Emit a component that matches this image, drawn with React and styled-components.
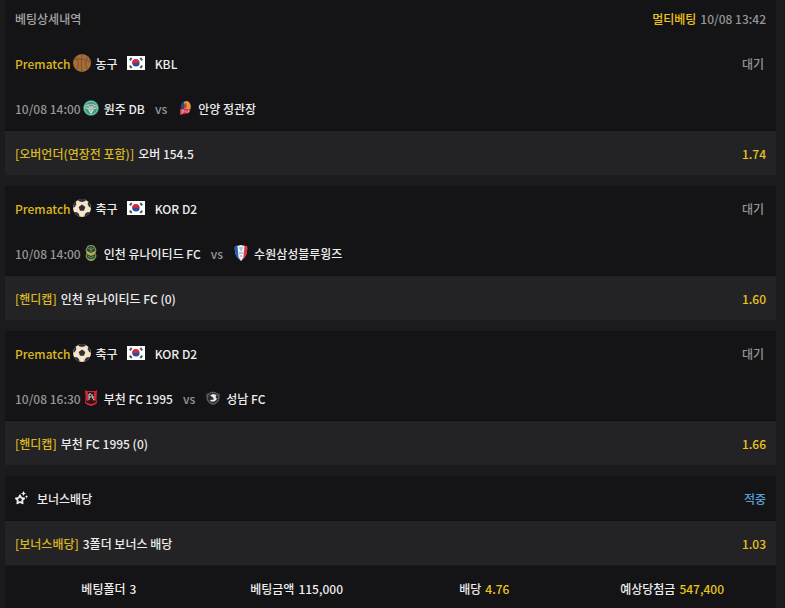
import React from 'react'
import styled, { createGlobalStyle } from 'styled-components'

const bets = [
  {
    id: 1,
    sport: 'basketball',
    sportName: '농구',
    league: 'KBL',
    time: '10/08 14:00',
    home: { name: '원주 DB', logo: 'wonju' },
    away: { name: '안양 정관장', logo: 'anyang' },
    market: '[오버언더(연장전 포함)]',
    pick: '오버 154.5',
    odds: '1.74'
  },
  {
    id: 2,
    sport: 'soccer',
    sportName: '축구',
    league: 'KOR D2',
    time: '10/08 14:00',
    home: { name: '인천 유나이티드 FC', logo: 'incheon' },
    away: { name: '수원삼성블루윙즈', logo: 'suwon' },
    market: '[핸디캡]',
    pick: '인천 유나이티드 FC (0)',
    odds: '1.60'
  },
  {
    id: 3,
    sport: 'soccer',
    sportName: '축구',
    league: 'KOR D2',
    time: '10/08 16:30',
    home: { name: '부천 FC 1995', logo: 'bucheon' },
    away: { name: '성남 FC', logo: 'seongnam' },
    market: '[핸디캡]',
    pick: '부천 FC 1995 (0)',
    odds: '1.66'
  }
]

const totals = [
  { label: '베팅폴더', value: '3' },
  { label: '베팅금액', value: '115,000' },
  { label: '배당', value: '4.76', gold: true },
  { label: '예상당첨금', value: '547,400', gold: true }
]

const sportIcons = {
  basketball: (
    <>
      <circle cx='9' cy='9' r='9' fill='#a46c39' />
      <g fill='none' stroke='#6f4b28' strokeWidth='0.8'>
        <path d='M0.500 6C6 4 12 5 17.500 8M9.500 0C8 5 8 12 9 18M2.500 3C6 7 6 12 3.500 16M15.500 2.500C12 6 12 12 14.500 16' />
      </g>
    </>
  ),
  soccer: (
    <>
      <circle cx='9' cy='9' r='9' fill='#f6e5cd' />
      <g fill='#302f31'>
        <path d='M9 5.600L12.300 8L11 11.800H7L5.700 8Z' />
        <path d='M5 0.900L6 2.200L9 3L12 2.200L13 0.900Q9-1 5 0.900Z' />
        <path d='M15 2.200L14.800 5.500L16.200 8L18 8.800Q18 5 15 2.200Z' />
        <path d='M3 2.200L3.200 5.500L1.800 8L0 8.800Q0 5 3 2.200Z' />
        <path d='M17 13L14 13.300L12 15L11.400 17.700Q15 16.700 17 13Z' />
        <path d='M1 13L4 13.300L6 15L6.600 17.700Q3 16.700 1 13Z' />
      </g>
    </>
  )
}

const teamLogos = {
  wonju: (
    <>
      <circle cx='8' cy='8' r='7.800' fill='#3a9c84' />
      <circle cx='8' cy='8' r='6.600' fill='none' stroke='#8fd3bd' strokeWidth='0.8' />
      <path d='M2 7Q3 4 8 4Q13 4 14 7L13 9H3Z' fill='#b3c9c1' />
      <path d='M3 7H6M10 7H13M6 5L8 6L10 5' stroke='#5c7770' fill='none' />
      <path d='M5 9.500H11L8 14Z' fill='#dceee6' />
      <path d='M7 10H9L8 13Z' fill='#c8a94c' />
    </>
  ),
  anyang: (
    <>
      <path d='M4 9Q3 1 9 1L8 10H4Z' fill='#2b4788' />
      <path d='M7 2Q10 0 12 2Q15 5 13 10L7 10Z' fill='#e2953a' />
      <path d='M7 4L9 3L10 7L7 9Z' fill='#b5463f' />
      <path d='M3 9L13 9L12 13L3 15Z' fill='#cf2c48' />
      <path d='M5 10V14M5 10H7V12H5M9 10V13M11 10H12V12H10' stroke='#f1b2af' strokeWidth='0.8' fill='none' />
    </>
  ),
  incheon: (
    <>
      <path d='M4.500 1Q8-1 11.500 1L13.500 5L12.500 8L13.500 11Q12 16 8 16Q4 16 2.500 11L3.500 8L2.500 5Z' fill='#a39c42' />
      <path d='M5 2Q8 0 11 2L12.500 5.500L8 8L3.500 5.500Z' fill='#174a4a' />
      <path d='M3.500 9L8 11L12.500 9L12 12.500Q8 16 4 12.500Z' fill='#174a4a' />
      <path d='M5 3L8 5L11 3M8 2V7M5 11L8 13L11 11' stroke='#72905a' fill='none' />
      <path d='M4 7L8 9.500L12 7' stroke='#d4c040' fill='none' />
    </>
  ),
  suwon: (
    <>
      <path d='M2 1Q5 1 8 0Q11 1 14 1Q15 9 11 13L8 16L5 13Q1 9 2 1Z' fill='#eef1f5' />
      <path d='M2 1L4.500 1L5.500 12L8 16L4 12Q1 8 2 1Z' fill='#2a5db1' />
      <path d='M14 1H11.500L10.500 12L8 16L12 12Q15 8 14 1Z' fill='#d93546' />
      <path d='M6 3H10M7 5H9M6 8H10M7 11H9' stroke='#8399bd' />
    </>
  ),
  bucheon: (
    <>
      <path d='M2 0L4 1H12L14 0L13.500 8L14 13Q11 16 8 16Q5 16 2 13L2.500 8Z' fill='#d32434' />
      <path d='M5 2H11V9Q11 12 8 13Q5 12 5 9Z' fill='#29191b' />
      <path d='M6 4V10M6 4H8M6 7H8M9 4V7H11M9 7L11 10' stroke='#e8dcda' fill='none' />
      <path d='M3 11Q8 15 13 11' stroke='#180e10' strokeWidth='1.500' fill='none' />
    </>
  ),
  seongnam: (
    <>
      <path d='M1 4L4 3Q8 0 12 3L15 4L14.500 9Q13 14 8 15Q3 14 1.500 9Z' fill='#4b4c4e' />
      <circle cx='8' cy='8' r='5.500' fill='#2a2b2c' stroke='#8b8d8f' strokeDasharray='1 1' />
      <path d='M5 5.500L8 4L11.500 5L10.500 7L12 9L9.500 11.500H6L5 10L9 9.500L8 7.500Z' fill='#eeeeee' />
    </>
  )
}

const Flag = () => (
  <svg width='18' height='14' viewBox='0 0 18 14' aria-hidden='true'>
    <rect width='18' height='14' fill='#ffffff' />
    <circle cx='9' cy='7' r='3.600' fill='#21509c' />
    <path d='M5.600 8.200A3.600 3.600 0 1 1 12.200 5.400Q11 7.400 9 7Q6.500 6.500 5.600 8.200Z' fill='#d6293a' />
    <path
      d='M2.800 4.300L4.700 2M13.300 2L15.200 4.300M2.800 9.700L4.700 12M13.300 12L15.200 9.700'
      stroke='#555555'
      strokeWidth='2'
    />
  </svg>
)

const BonusIcon = () => (
  <svg width='14' height='14' viewBox='0 0 14 14' fill='none' aria-hidden='true'>
    <path
      d='M5 4.300L6.300 6.800L9.200 7.300L7.200 9.400L7.600 12.300L5 11L2.300 12.300L2.800 9.400L0.900 7.300L3.700 6.800Z'
      stroke='#ededed'
      strokeWidth='1.800'
      strokeLinejoin='round'
    />
    <path
      d='M8.500 0L9.300 1.700L11 2.500L9.300 3.300L8.500 5L7.700 3.300L6 2.500L7.700 1.700ZM11.500 4L12 5.200L13.200 5.700L12 6.200L11.500 7.400L11 6.200L9.800 5.700L11 5.200Z'
      fill='#ededed'
    />
  </svg>
)

const Team = ({ team }) => (
  <IconLabel>
    <svg width='16' height='16' viewBox='0 0 16 16' aria-hidden='true'>
      {teamLogos[team.logo]}
    </svg>
    {team.name}
  </IconLabel>
)

const Bet = ({ bet }) => (
  <Card>
    <Row>
      <Info>
        <Label $tone='gold'>Prematch</Label>
        <IconLabel>
          <svg width='18' height='18' viewBox='0 0 18 18' aria-hidden='true'>
            {sportIcons[bet.sport]}
          </svg>
          {bet.sportName}
        </IconLabel>
        <League>
          <Flag />
          {bet.league}
        </League>
      </Info>
      <Status>대기</Status>
    </Row>
    <Row>
      <Info>
        <Label $tone='muted'>{bet.time}</Label>
        <Team team={bet.home} />
        <Versus>vs</Versus>
        <Team team={bet.away} />
      </Info>
    </Row>
    <PickRow>
      <Pick>
        <Label $tone='gold'>{bet.market}</Label>
        <span>{bet.pick}</span>
      </Pick>
      <Label $tone='bright'>{bet.odds}</Label>
    </PickRow>
  </Card>
)

const App = () => (
  <Page>
    <GlobalStyle />
    <Header>
      <Title>베팅상세내역</Title>
      <Pick>
        <Label $tone='bright'>멀티베팅</Label>
        <Label $tone='muted'>10/08 13:42</Label>
      </Pick>
    </Header>
    {bets.map(bet => <Bet key={bet.id} bet={bet} />)}
    <Card>
      <Row>
        <Bonus>
          <BonusIcon />
          보너스배당
        </Bonus>
        <Label $tone='blue'>적중</Label>
      </Row>
      <PickRow>
        <Pick>
          <Label $tone='gold'>[보너스배당]</Label>
          <span>3폴더 보너스 배당</span>
        </Pick>
        <Label $tone='bright'>1.03</Label>
      </PickRow>
    </Card>
    <Totals>
      {totals.map(item => (
        <Total key={item.label}>
          <dt>{item.label}</dt>
          <Amount $gold={item.gold}>{item.value}</Amount>
        </Total>
      ))}
    </Totals>
  </Page>
)

const tones = {
  gold: '#dbb71f',
  bright: '#ecc51c',
  muted: '#969696',
  blue: '#5b9fd6'
}

const GlobalStyle = createGlobalStyle`
  * {
    box-sizing: border-box;
  }

  body {
    margin: 0;
    background: #1b1b1d;
    color: #ededed;
    font: 500 12px/18px 'Noto Sans CJK KR', sans-serif;
  }

  svg {
    display: block;
    flex: none;
  }
`

const Page = styled.main`
  padding: 0 9px 0 5px;
  white-space: nowrap;
`

const Row = styled.div`
  display: flex;
  align-items: center;
  justify-content: space-between;
  height: 45px;
  padding: 0 10px;
  background: #141416;
`

const Header = styled(Row).attrs({ as: 'header' })`
  height: 41px;
  padding-bottom: 3px;
`

const PickRow = styled(Row)`
  padding-top: 2px;
  background: #232326;
  border-bottom: 1px solid #1b1b1d;
  box-shadow: 0 -1px #101012;
`

const Card = styled.section`
  & + & {
    margin-top: 10px;
  }
`

const Info = styled.div`
  display: flex;
  align-items: center;
  gap: 2px;
`

const Pick = styled(Info)`
  gap: 4px;
`

const Title = styled.h1`
  margin: 0;
  color: #a5a5a5;
  font: inherit;
`

const Label = styled.span`
  color: ${props => tones[props.$tone]};
`

const Status = styled.span`
  padding-right: 2px;
  color: #969696;
`

const IconLabel = styled.span`
  display: flex;
  align-items: center;
  gap: 5px;

  svg {
    margin-bottom: 2px;
  }
`

const League = styled(IconLabel)`
  gap: 10px;
  margin-left: 7px;
`

const Versus = styled.span`
  margin: 0 8px;
  color: #969696;
`

const Bonus = styled(IconLabel)`
  gap: 8px;
`

const Totals = styled.dl`
  display: grid;
  grid-template-columns: repeat(4, 1fr);
  margin: 0;
  padding: 14px 10px 10px;
  background: #141416;
`

const Total = styled.div`
  display: flex;
  justify-content: center;
  gap: 4px;
`

const Amount = styled.dd`
  margin: 0;
  color: ${props => props.$gold ? tones.bright : 'inherit'};
`

export default App
